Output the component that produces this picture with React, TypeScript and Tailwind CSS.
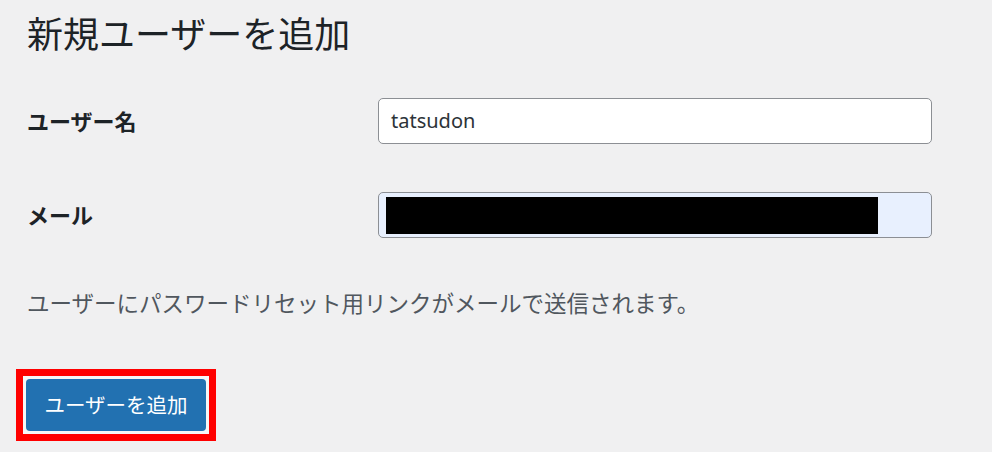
export default function App() {
  const font = { fontFamily: '"Noto Sans", "Noto Sans CJK JP", sans-serif' };
  return (
    <div
      className="w-[992px] h-[452px] bg-[#f0f0f1] text-[#1d2327] pl-[27px] pt-[14px] overflow-hidden"
      style={font}
    >
      <h1 className="text-[36px] leading-[42px] font-normal">新規ユーザーを追加</h1>

      <div className="mt-[42px] flex flex-col gap-[48px] w-[905px]">
        <div className="flex items-center">
          <label className="w-[351px] text-[22px] leading-[30px] font-bold">ユーザー名</label>
          <div className="flex-1 h-[46px] bg-white border border-[#8c8f94] rounded-[5px] flex items-center px-[12px] text-[20px] text-[#2c3338]">
            tatsudon
          </div>
        </div>
        <div className="flex items-center">
          <label className="w-[351px] text-[22px] leading-[30px] font-bold">メール</label>
          <div className="flex-1 h-[46px] bg-[#e8f0fe] border border-[#8c8f94] rounded-[5px] flex items-center px-[7px]">
            <div className="w-[492px] h-[37px] bg-black" />
          </div>
        </div>
      </div>

      <p className="mt-[51px] text-[22.5px] leading-[30px] text-[#50575e]">
        ユーザーにパスワードリセット用リンクがメールで送信されます。
      </p>

      <div className="mt-[50px] -ml-[11px] w-[200px] h-[72px] border-[7px] border-[#ff0000] bg-[#f6f7f7] p-[3px]">
        <button className="w-full h-full bg-[#2271b1] text-white text-[20.5px] leading-none rounded-[4px] flex items-center justify-center">
          ユーザーを追加
        </button>
      </div>
    </div>
  );
}
